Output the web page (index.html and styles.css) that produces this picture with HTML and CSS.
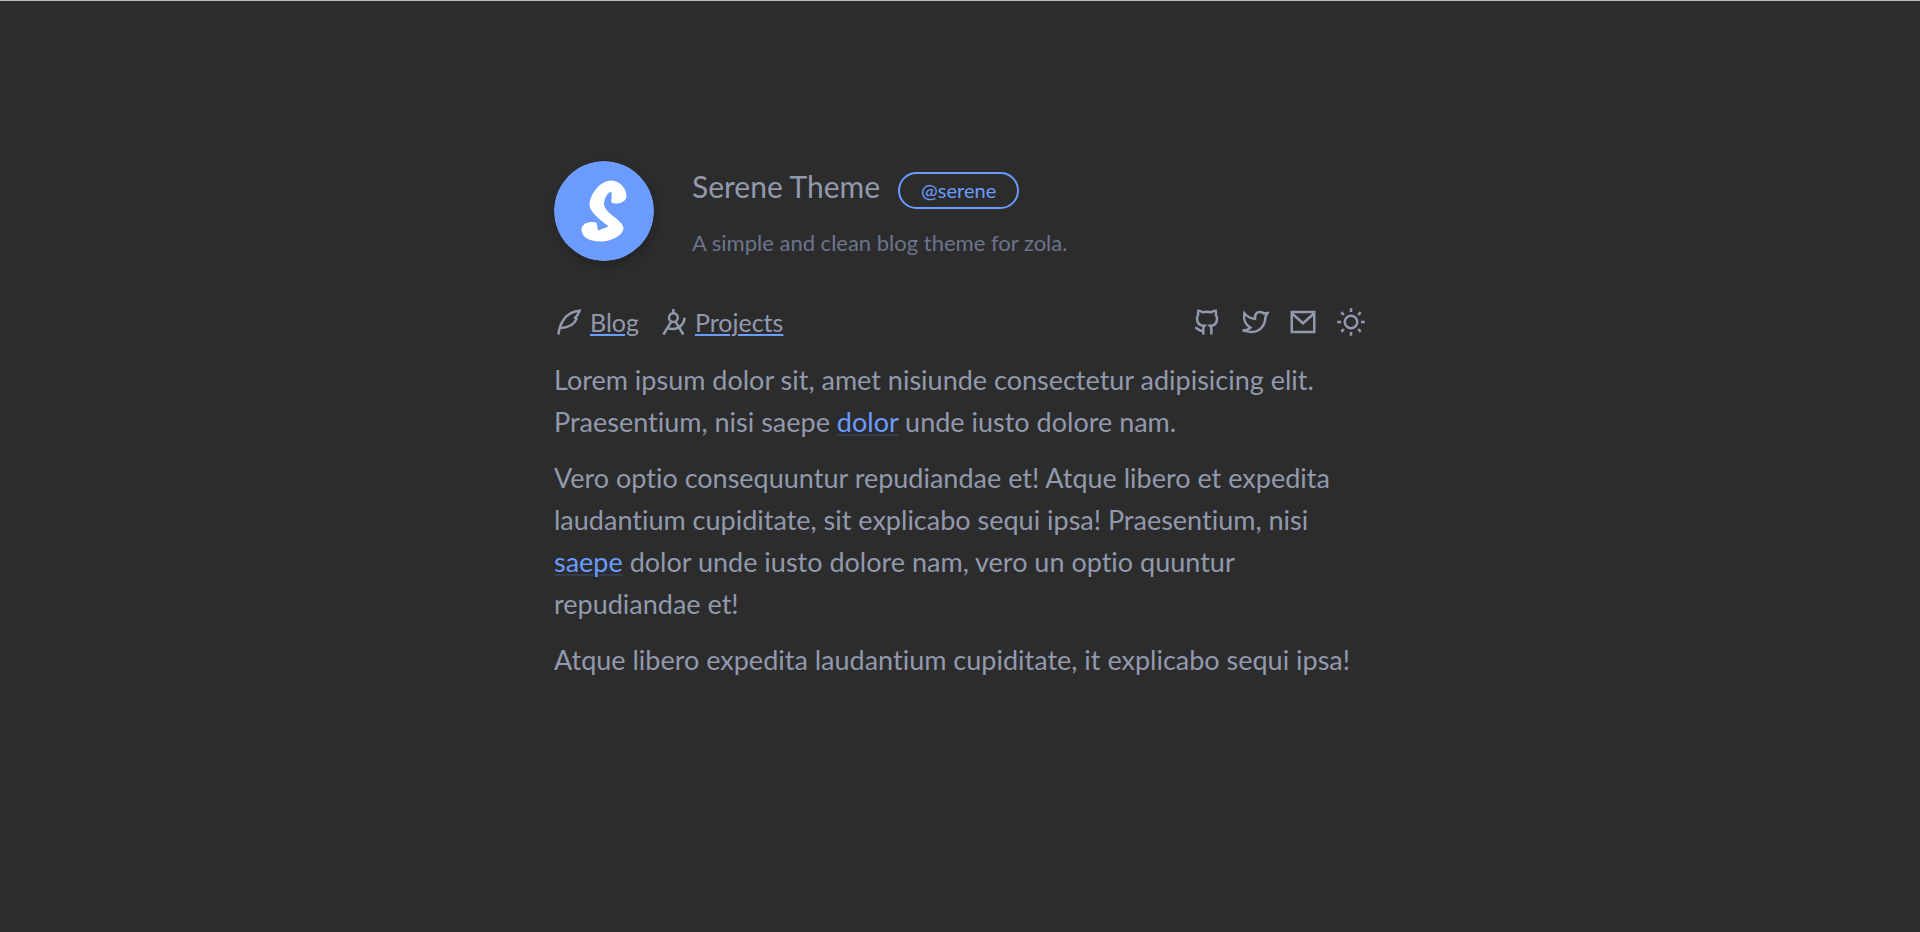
FILE: index.html
```html
<!DOCTYPE html>
<html lang="en">
<head>
<meta charset="utf-8">
<meta name="viewport" content="width=device-width, initial-scale=1">
<title>Serene Theme</title>
<link rel="stylesheet" href="styles.css">
</head>
<body>
<main class="page">
  <header class="profile">
    <svg class="avatar" viewBox="0 0 100 100" role="img" aria-label="Serene logo">
      <circle cx="50" cy="50" r="50" fill="#6b9bff"/>
      <path d="M57.500 41.500C59 43 70 44 72.500 36C73 28 66 19.500 57 19.500C46 19.500 35.500 34 35.500 44C36 52 47 59 54.500 65.500L44 69.500L42.500 61.500C37 60 27.500 61 27.500 69C28 77 37 80.500 46 80.500C57 80.500 69 75 69.500 67C69 59 50 52 50 43C50 38 53 32 57 30.500C58.500 33 57 38 57.500 41.500Z" fill="#fff"/>
    </svg>
    <div class="intro">
      <div class="title-row">
        <h1 class="name">Serene Theme</h1>
        <a class="handle" href="#">@serene</a>
      </div>
      <p class="bio">A simple and clean blog theme for zola.</p>
    </div>
  </header>
  <nav class="nav">
    <div class="sections">
      <a class="section" href="#">
        <svg class="icon" viewBox="0 0 24 24" aria-hidden="true"><path d="M3.500 22C4.500 14 9 3.500 20.500 3C19.500 5.500 19 7 17 8.500L18 9.500C16 14.500 12 16.500 5.500 16.800"/></svg>
        <span class="label">Blog</span>
      </a>
      <a class="section" href="#">
        <svg class="icon" viewBox="0 0 24 24" aria-hidden="true"><circle cx="11.500" cy="8.500" r="3.500"/><path d="M11.500 1.500V5M10 11.500L3.500 22M13 11.500L19.500 22M6.500 16.500C12 19.500 20 16 20.500 8.500"/></svg>
        <span class="label">Projects</span>
      </a>
    </div>
    <div class="socials">
      <a class="social" href="#" aria-label="GitHub"><svg class="icon" viewBox="0 0 24 24" aria-hidden="true"><path d="M9 22V17.500Q9 16 10 15C6 14.800 4 13 4 9.500C4 8 4.300 7 5 6.200Q4.600 4.500 5 3Q7 3 8.600 4.200Q12 3.500 15.400 4.200Q17 3 19 3Q19.400 4.500 19 6.200C19.700 7 20 8 20 9.500C20 13 18 14.800 14.500 15Q15.500 16 15.500 17.500V22M9 19C5.500 20 5.500 17 2.500 16.500"/></svg></a>
      <a class="social" href="#" aria-label="Twitter"><svg class="icon" viewBox="0 0 24 24" aria-hidden="true"><path d="M12 8.500C12 5.500 13.700 4 16 4C17.500 4 18.500 4.500 19.200 5.200L22 4.800L20.300 8C20.300 14 16.500 20 9.500 20C6.500 20 4 19.300 2 18.800C5 18.800 7 17.800 8.300 16.500C4.500 14.500 2.500 10 3.500 5C6 8 9 9.300 12 9.500Z"/></svg></a>
      <a class="social" href="#" aria-label="Email"><svg class="icon" viewBox="0 0 24 24" aria-hidden="true"><path d="M3 4H21V20H3ZM3 5L12 13L21 5"/></svg></a>
      <button class="social" type="button" aria-label="Toggle theme"><svg class="icon" viewBox="0 0 24 24" aria-hidden="true"><circle cx="12" cy="12" r="5"/><path d="M12 1V4M12 20V23M1 12H4M20 12H23M4.200 4.200L6.300 6.300M17.700 17.700L19.800 19.800M4.200 19.800L6.300 17.700M17.700 6.300L19.800 4.200"/></svg></button>
    </div>
  </nav>
  <section class="content">
    <p>Lorem ipsum dolor sit, amet nisiunde consectetur adipisicing elit. Praesentium, nisi saepe <a href="#">dolor</a> unde iusto dolore nam.</p>
    <p>Vero optio consequuntur repudiandae et! Atque libero et expedita laudantium cupiditate, sit explicabo sequi ipsa! Praesentium, nisi <a href="#">saepe</a> dolor unde iusto dolore nam, vero un optio quuntur repudiandae et!</p>
    <p>Atque libero expedita laudantium cupiditate, it explicabo sequi ipsa!</p>
  </section>
</main>
</body>
</html>
```
FILE: styles.css
```css
* {
  box-sizing: border-box;
}

body {
  margin: 0;
  min-height: 100vh;
  border-top: 1px solid #b9bcbb;
  background: #2c2c2c;
  color: #9299ad;
  font-family: Lato, "Liberation Sans", sans-serif;
  font-size: 27px;
  font-variant-ligatures: none;
  line-height: 42px;
}

h1,
p {
  margin: 0;
}

a {
  color: inherit;
}

.page {
  max-width: 860px;
  margin: 0 auto;
  padding: 160px 24px;
}

.profile {
  display: flex;
  align-items: center;
  gap: 38px;
}

.avatar {
  flex: none;
  width: 100px;
  height: 100px;
  border-radius: 50%;
  box-shadow: 2px 4px 10px rgba(0, 0, 0, 0.2);
}

.title-row {
  display: flex;
  align-items: center;
  gap: 18px;
}

.name {
  font-size: 30px;
  font-weight: 400;
  line-height: 42px;
}

.handle {
  margin-top: 8px;
  padding: 0 21px;
  border: 2px solid #6b9bff;
  border-radius: 20px;
  color: #6b9bff;
  font-size: 20px;
  line-height: 33px;
  text-decoration: none;
}

.bio {
  margin-top: 18px;
  color: #6d748b;
  font-size: 22px;
  line-height: 32px;
}

.nav {
  display: flex;
  justify-content: space-between;
  align-items: center;
  margin-top: 40px;
}

.sections {
  display: flex;
  align-items: center;
  gap: 20px;
}

.socials {
  display: flex;
  align-items: center;
  gap: 18px;
}

.section {
  display: flex;
  align-items: center;
  gap: 6px;
  font-size: 25px;
  text-decoration: none;
}

.label {
  text-decoration: underline 2px #6b9bff;
  text-underline-offset: 2px;
}

.social {
  display: flex;
  padding: 0;
  border: 0;
  background: none;
  color: inherit;
  cursor: pointer;
}

.icon {
  width: 30px;
  height: 30px;
  fill: none;
  stroke: currentColor;
  stroke-width: 2;
}

.content {
  display: flex;
  flex-direction: column;
  gap: 14px;
  margin-top: 16px;
}

.content a {
  color: #6b9bff;
  text-decoration: underline 2px #353c4e;
  text-underline-offset: 2px;
}
```
